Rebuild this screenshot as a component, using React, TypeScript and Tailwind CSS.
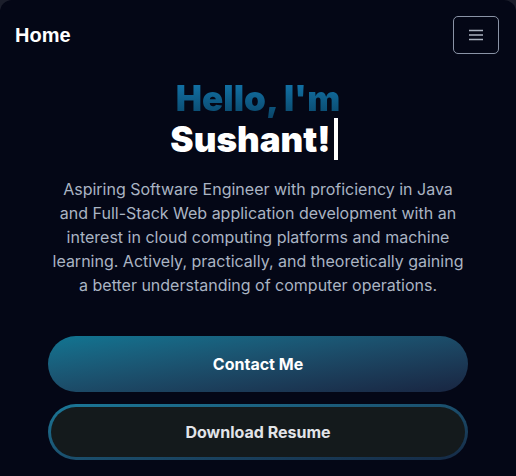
import React from "react";

const App = () => {
  return (
    <div className="min-h-screen bg-[#1b1e2b]">
      <div className="min-h-[476px] bg-[#040716] rounded-t-[12px] font-['Inter',sans-serif]">
        <header className="flex items-center justify-between h-[70px] pl-[15px] pr-[17px]">
          <h1 className="text-white text-[20px] font-bold font-['Liberation_Sans',sans-serif]">Home</h1>
          <button className="w-[46px] h-[38px] flex items-center justify-center border border-[#8a93a6] rounded-[5px]">
            <svg width="16" height="12" viewBox="0 0 16 12" fill="none">
              <path d="M1 1.5h14M1 6h14M1 10.5h14" stroke="#aab2c0" strokeWidth="1.3" />
            </svg>
          </button>
        </header>

        <div className="flex flex-col items-center px-[48px]">
          <h2 className="mt-[8px] text-[35px] leading-[40px] font-black bg-gradient-to-b from-[#1379b0] to-[#0a4669] bg-clip-text text-transparent">
            Hello, I'm
          </h2>
          <div className="flex items-center mr-[8px]">
            <span className="text-white text-[35px] leading-[41px] font-black">Sushant!</span>
            <span className="ml-[3px] w-[4px] h-[42px] bg-white"></span>
          </div>

          <p className="mt-[17px] text-center text-[16px] leading-[24px] text-[#aab4c3] max-w-[420px]">
            Aspiring Software Engineer with proficiency in Java and Full-Stack Web application development with an interest in cloud computing platforms and machine learning. Actively, practically, and theoretically gaining a better understanding of computer operations.
          </p>

          <div className="w-full flex flex-col gap-[12px] mt-[39px]">
            <button className="h-[56px] w-full rounded-full bg-gradient-to-br from-[#107592] to-[#182541] text-white text-[16px] font-bold">
              Contact Me
            </button>
            <div className="h-[56px] w-full rounded-full p-[3px] bg-gradient-to-br from-[#1a7898] to-[#152a45]">
              <button className="h-full w-full rounded-full bg-[#141a1c] text-[#e2e4e8] text-[16px] font-bold">
                Download Resume
              </button>
            </div>
          </div>
        </div>
      </div>
    </div>
  );
};

export default App;
